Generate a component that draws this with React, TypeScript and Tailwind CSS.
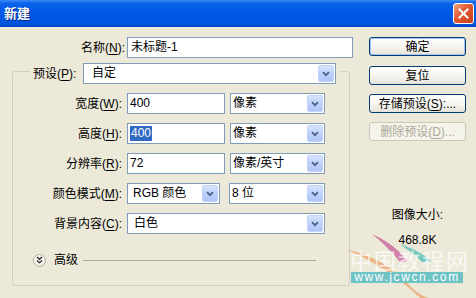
import React from "react";

function Key({ k }: { k: string }) {
  return (
    <>
      (<span className="underline underline-offset-2">{k}</span>):
    </>
  );
}

function Arrow() {
  return (
    <span className="flex h-[17px] w-[16px] shrink-0 items-center justify-center rounded-[2px] border border-[#C3D3FD] bg-[linear-gradient(180deg,#D6E3FE_0%,#BCD0FB_55%,#AFC6F7_100%)]">
      <svg width="8" height="6" viewBox="0 0 8 6">
        <path d="M1 1.2 L4 4.2 L7 1.2" fill="none" stroke="#4D6185" strokeWidth="1.8" />
      </svg>
    </span>
  );
}

function Select({ value, className }: { value: string; className: string }) {
  return (
    <div
      className={`flex h-[21px] items-center border border-[#7F9DB9] bg-white pr-[1px] ${className}`}
    >
      <span className="flex-1 truncate leading-[19px]">{value}</span>
      <Arrow />
    </div>
  );
}

function Field({ value, selected, className }: { value: string; selected?: boolean; className: string }) {
  return (
    <div className={`flex h-[21px] items-center border border-[#7F9DB9] bg-white pl-[2px] ${className}`}>
      {selected ? (
        <span className="bg-[#316AC5] px-px leading-[15px] text-white">{value}</span>
      ) : (
        <span className="leading-[19px]">{value}</span>
      )}
    </div>
  );
}

function Row({ label, k, children }: { label: string; k: string; children: React.ReactNode }) {
  return (
    <div className="mt-[9px] flex h-[21px] items-center">
      <span className="w-[109px] text-right">
        {label}
        <Key k={k} />
      </span>
      <div className="ml-[5px] flex">{children}</div>
    </div>
  );
}

function XpButton({
  children,
  className,
  primary,
  disabled,
}: {
  children: React.ReactNode;
  className: string;
  primary?: boolean;
  disabled?: boolean;
}) {
  return (
    <div
      className={`flex h-[19px] w-[97px] items-center justify-center rounded-[3px] border ${
        disabled
          ? "border-[#C9C7BA] bg-[#F5F4EA] text-[#ACA899]"
          : "border-[#003C74] bg-[linear-gradient(180deg,#FFFFFF_0%,#F5F4EF_55%,#E4E2DA_100%)] text-black"
      } ${primary ? "shadow-[inset_0_0_0_1px_#A8C6F3]" : ""} ${className}`}
    >
      {children}
    </div>
  );
}

export default function App() {
  return (
    <div className="relative h-[298px] w-[476px] overflow-hidden bg-[#ECE9D8] font-[family-name:'Liberation_Sans','Noto_Sans_CJK_SC',sans-serif] text-[12px] text-black">
      {/* title bar */}
      <div className="flex h-[27px] items-center justify-between bg-[linear-gradient(180deg,#3C8CF7_0%,#0A62E8_12%,#0058E6_50%,#0054E0_85%,#0046C8_100%)] pl-[4px] pr-[2px]">
        <span className="text-[13px] font-bold text-white [text-shadow:1px_1px_0_#0A2A80]">新建</span>
        <div className="flex h-[21px] w-[21px] items-center justify-center rounded-[3px] border border-white bg-[linear-gradient(135deg,#F0A488_0%,#E2592F_45%,#C8401A_100%)]">
          <svg width="11" height="11" viewBox="0 0 11 11">
            <path d="M1.5 1.5 L9.5 9.5 M9.5 1.5 L1.5 9.5" stroke="white" strokeWidth="2" strokeLinecap="square" />
          </svg>
        </div>
      </div>

      <div className="flex">
        {/* left side */}
        <div className="w-[356px]">
          <div className="mt-[10px] flex h-[21px] items-center">
            <span className="w-[125px] text-right">
              名称<Key k="N" />
            </span>
            <Field value="未标题-1" className="ml-[2px] w-[226px] pl-[3px]" />
          </div>

          <div className="ml-[12px] mt-[13px] h-[215px] w-[338px] rounded-[3px] border border-[#D0D0BF]">
            <div className="-mt-[9px] ml-[17px] flex h-[21px] w-[310px] items-center bg-[#ECE9D8] pl-[3px] pr-[4px]">
              <span className="w-[50px]">
                预设<Key k="P" />
              </span>
              <Select value="自定" className="w-[253px] pl-[8px]" />
            </div>

            <Row label="宽度" k="W">
              <Field value="400" className="w-[98px]" />
              <Select value="像素" className="ml-[5px] w-[95px] pl-[2px]" />
            </Row>
            <Row label="高度" k="H">
              <Field value="400" selected className="w-[98px]" />
              <Select value="像素" className="ml-[5px] w-[95px] pl-[2px]" />
            </Row>
            <Row label="分辨率" k="R">
              <Field value="72" className="w-[98px]" />
              <Select value="像素/英寸" className="ml-[5px] w-[95px] pl-[2px]" />
            </Row>
            <Row label="颜色模式" k="M">
              <Select value="RGB 颜色" className="w-[93px] pl-[5px]" />
              <Select value="8 位" className="ml-[9px] w-[96px] pl-[2px]" />
            </Row>
            <Row label="背景内容" k="C">
              <Select value="白色" className="w-[198px] pl-[6px]" />
            </Row>

            <div className="mt-[19px] flex h-[14px] items-center">
              <span className="ml-[20px] flex h-[13px] w-[13px] items-center justify-center rounded-full border border-[#B5B2A4] bg-[radial-gradient(circle_at_40%_35%,#FFFFFF_0%,#F3F2EC_55%,#D6D3C6_100%)]">
                <svg width="7" height="8" viewBox="0 0 7 8">
                  <path d="M1 1 L3.5 3.3 L6 1 M1 4.4 L3.5 6.7 L6 4.4" fill="none" stroke="#2B2B2B" strokeWidth="1.3" />
                </svg>
              </span>
              <span className="ml-[8px]">高级</span>
              <span className="ml-[5px] h-px w-[233px] bg-[#A8A697]" />
            </div>
          </div>
        </div>

        {/* right side */}
        <div className="ml-[13px] flex w-[97px] flex-col">
          <XpButton primary className="mt-[10px]">确定</XpButton>
          <XpButton className="mt-[10px]">复位</XpButton>
          <XpButton className="mt-[9px]">
            存储预设<Key k="S" />
            ...
          </XpButton>
          <XpButton disabled className="mt-[9px]">
            删除预设(<span className="underline underline-offset-2">D</span>)...
          </XpButton>
          <div className="mt-[67px] text-center leading-[14px]">图像大小:</div>
          <div className="mt-[11px] text-center leading-[14px]">468.8K</div>
        </div>
      </div>

      {/* watermark */}
      <div className="pointer-events-none absolute left-[340px] top-[228px] h-[70px] w-[136px]">
        <svg className="absolute left-0 top-0" width="136" height="70" viewBox="0 0 136 70">
          <path d="M8 22 C30 26 55 40 70 58 C78 66 86 70 90 70 L80 70 C66 56 40 36 8 22 Z" fill="#EBA268" opacity="0.75" />
          <path d="M32 6 C46 12 60 22 68 34 L60 34 C52 24 42 14 32 6 Z" fill="#C9679B" opacity="0.8" />
          <path d="M60 16 C72 20 84 26 92 34 L82 34 C76 28 68 22 60 16 Z" fill="#5DBFB6" opacity="0.8" />
        </svg>
        <div className="absolute left-[10px] top-[19px] whitespace-nowrap text-[22px] leading-[24px] tracking-[2px] text-white opacity-70 [font-family:'Noto_Sans_CJK_SC',sans-serif]">
          中国教程网
        </div>
        <div className="absolute left-[11px] top-[44px] flex h-[11px] w-[112px] items-center justify-center whitespace-nowrap bg-[#6EC3C4] text-[12px] leading-[11px] tracking-[1.6px] text-white">
          www.jcwcn.com
        </div>
      </div>
    </div>
  );
}
